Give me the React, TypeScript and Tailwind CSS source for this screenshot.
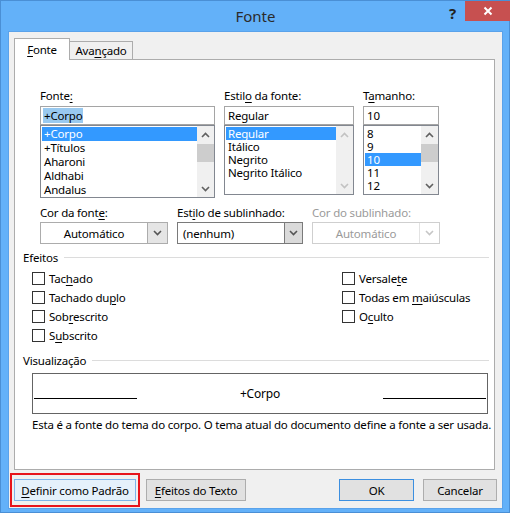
import type { ReactNode } from 'react';

function U({ children }: { children: ReactNode }) {
  return <span className="underline underline-offset-[2px] decoration-1">{children}</span>;
}

function Chevron({ up, color }: { up?: boolean; color: string }) {
  return (
    <svg width="9" height="6" viewBox="0 0 9 6">
      <polyline
        points={up ? '1,5 4.5,1.5 8,5' : '1,1 4.5,4.5 8,1'}
        fill="none"
        stroke={color}
        strokeWidth="1.6"
      />
    </svg>
  );
}

function ScrollBar({ enabled, height }: { enabled: boolean; height: number }) {
  const color = enabled ? '#606060' : '#c2c2c2';
  return (
    <div className="w-[17px] bg-[#f0f0f0] flex flex-col" style={{ height }}>
      <div className="h-[17px] flex items-center justify-center">
        <Chevron up color={color} />
      </div>
      {enabled && <div className="h-[18px] bg-[#cdcdcd] mt-[1px]" />}
      <div className="flex-1" />
      <div className="h-[17px] flex items-center justify-center">
        <Chevron color={color} />
      </div>
    </div>
  );
}

function ListBox({
  items,
  selected,
  height,
  rowH,
  scroll,
}: {
  items: string[];
  selected: number;
  height: number;
  rowH: string;
  scroll: boolean;
}) {
  return (
    <div className="flex border border-[#828790] bg-white" style={{ height }}>
      <div className="flex-1 pt-[1px] pl-[1px] overflow-hidden">
        {items.map((item, i) => (
          <div
            key={item}
            className={`${rowH} flex items-center pl-[2px] ${
              i === selected ? 'bg-[#3399ff] text-white' : 'text-black'
            }`}
          >
            {item}
          </div>
        ))}
      </div>
      <ScrollBar enabled={scroll} height={height - 2} />
    </div>
  );
}

function Dropdown({
  text,
  width,
  arrowW,
  center,
  variant,
}: {
  text: string;
  width: string;
  arrowW: string;
  center?: boolean;
  variant: 'normal' | 'hot' | 'disabled';
}) {
  const border =
    variant === 'hot' ? 'border-[#7a7a7a]' : variant === 'disabled' ? 'border-[#cfcfcf]' : 'border-[#acacac]';
  const arrowBg =
    variant === 'hot'
      ? 'bg-[#dadada] border-l border-[#7a7a7a]'
      : variant === 'disabled'
      ? 'bg-white border-l border-[#e3e3e3]'
      : 'bg-[#e5e5e5] border-l border-[#acacac]';
  return (
    <div className={`${width} h-[22px] flex border ${border} bg-white`}>
      <div
        className={`flex-1 flex items-center ${center ? 'justify-center' : 'pl-[5px]'} ${
          variant === 'disabled' ? 'text-[#9a9a9a]' : 'text-black'
        }`}
      >
        {text}
      </div>
      <div className={`${arrowW} flex items-center justify-center ${arrowBg}`}>
        <Chevron color={variant === 'disabled' ? '#c6c6c6' : '#555555'} />
      </div>
    </div>
  );
}

function Check({ children }: { children: ReactNode }) {
  return (
    <div className="h-[19px] flex items-center">
      <div className="w-[13px] h-[13px] border border-[#333333] bg-white" />
      <span className="ml-[4px]">{children}</span>
    </div>
  );
}

function GroupHeader({ children }: { children: ReactNode }) {
  return (
    <div className="h-[15px] flex items-center pl-[8px] pr-[5px]">
      <span>{children}</span>
      <div className="flex-1 h-px bg-[#dcdcdc] ml-[6px]" />
    </div>
  );
}

function Button({ children, variant }: { children: ReactNode; variant: 'focus' | 'default' | 'normal' }) {
  const cls =
    variant === 'focus'
      ? 'bg-[#e5f1fb] border-[#7eb4ea]'
      : variant === 'default'
      ? 'bg-[#e1e1e1] border-[#3c8fe0]'
      : 'bg-[#e1e1e1] border-[#adadad]';
  return (
    <div className={`h-[22px] w-full flex items-center justify-center border ${cls} text-black`}>
      {children}
    </div>
  );
}

export default function App() {
  return (
    <div className="w-[511px] h-[517px] bg-white font-['Noto_Sans',sans-serif] text-[11.5px] tracking-[-0.2px] leading-[15px] text-black">
      <div className="w-[510px] h-[513px] bg-[#63b1f9] border border-[#4a8fd5] pl-[7px] pr-[6px] flex flex-col">
        {/* title bar */}
        <div className="h-[30px] relative flex justify-center pt-[6px]">
          <span className="text-[15px] tracking-normal leading-[18px] text-[#2b2b2b]">Fonte</span>
          <div className="absolute top-0 -right-[7px] flex items-start">
            <span className="text-[15px] font-bold leading-[18px] text-[#222] mt-[3px] mr-[9px]">?</span>
            <div className="w-[45px] h-[20px] bg-[#c75050] flex items-center justify-center">
              <svg width="10" height="10" viewBox="0 0 10 10">
                <path d="M1.5 1.5 L8.5 8.5 M8.5 1.5 L1.5 8.5" stroke="white" strokeWidth="2" />
              </svg>
            </div>
          </div>
        </div>

        {/* client area */}
        <div className="h-[478px] bg-[#f0f0f0] border border-[#5aa2ea] px-[5px] pt-[6px] flex flex-col">
          {/* tabs */}
          <div className="h-[21px] flex items-end">
            <div className="h-[22px] w-[56px] -mb-px relative z-10 bg-white border-l border-t border-r border-[#acacac] flex items-center justify-center">
              <span>
                <U>F</U>onte
              </span>
            </div>
            <div className="h-[18px] w-[64px] -ml-px border border-b-0 border-[#acacac] bg-[#f0f0f0] flex items-center justify-center">
              <span>
                Ava<U>n</U>çado
              </span>
            </div>
          </div>

          {/* panel */}
          <div className="h-[411px] w-[481px] bg-white border border-[#acacac] pt-[28px] flex flex-col">
            <div className="flex items-start pl-[25px]">
              <div className="w-[175px]">
                <div className="h-[18px]">
                  Fonte<U>:</U>
                </div>
                <div className="h-[19px] border border-[#a5a5a5] flex items-center pl-[2px]">
                  <span className="bg-[#99c9ef] px-[1px]">+Corpo</span>
                </div>
                <ListBox
                  items={['+Corpo', '+Títulos', 'Aharoni', 'Aldhabi', 'Andalus']}
                  selected={0}
                  height={73}
                  rowH="h-[14px] leading-[14px]"
                  scroll
                />
              </div>
              <div className="w-[130px] ml-[9px]">
                <div className="h-[18px]">
                  Estil<U>o</U> da fonte:
                </div>
                <div className="h-[19px] border border-[#a5a5a5] flex items-center pl-[3px]">Regular</div>
                <ListBox
                  items={['Regular', 'Itálico', 'Negrito', 'Negrito Itálico']}
                  selected={0}
                  height={70}
                  rowH="h-[13px] leading-[13px]"
                  scroll={false}
                />
              </div>
              <div className="w-[76px] ml-[9px]">
                <div className="h-[18px]">
                  T<U>a</U>manho:
                </div>
                <div className="h-[19px] border border-[#a5a5a5] flex items-center pl-[3px]">10</div>
                <ListBox
                  items={['8', '9', '10', '11', '12']}
                  selected={2}
                  height={70}
                  rowH="h-[13px] leading-[13px]"
                  scroll
                />
              </div>
            </div>

            {/* colour / underline row */}
            <div className="flex items-start pl-[25px] mt-[7px]">
              <div className="w-[128px]">
                <div className="h-[17px]">
                  Cor da font<U>e</U>:
                </div>
                <Dropdown text="Automático" width="w-[128px]" arrowW="w-[20px]" center variant="normal" />
              </div>
              <div className="w-[126px] ml-[9px]">
                <div className="h-[17px]">
                  Est<U>i</U>lo de sublinhado:
                </div>
                <Dropdown text="(nenhum)" width="w-[126px]" arrowW="w-[18px]" variant="hot" />
              </div>
              <div className="w-[128px] ml-[9px]">
                <div className="h-[17px] text-[#9a9a9a]">Cor do sublinhado:</div>
                <Dropdown text="Automático" width="w-[128px]" arrowW="w-[20px]" center variant="disabled" />
              </div>
            </div>

            {/* effects */}
            <div className="mt-[6px]">
              <GroupHeader>Efeitos</GroupHeader>
            </div>
            <div className="grid grid-cols-[310px_1fr] pl-[17px] mt-[4px]">
              <div className="flex flex-col">
                <Check>
                  Tac<U>h</U>ado
                </Check>
                <Check>
                  Tachado du<U>p</U>lo
                </Check>
                <Check>
                  Sob<U>r</U>escrito
                </Check>
                <Check>
                  S<U>u</U>bscrito
                </Check>
              </div>
              <div className="flex flex-col">
                <Check>
                  Versale<U>t</U>e
                </Check>
                <Check>
                  Todas em <U>m</U>aiúsculas
                </Check>
                <Check>
                  O<U>c</U>ulto
                </Check>
              </div>
            </div>

            {/* preview */}
            <div className="mt-[8px]">
              <GroupHeader>Visualização</GroupHeader>
            </div>
            <div className="ml-[17px] mt-[5px] w-[456px] h-[41px] border border-[#646464] flex items-start px-[1px]">
              <div className="w-[103px] h-[25px] border-b border-black" />
              <div className="flex-1 text-center pt-[12px] text-[12px]">+Corpo</div>
              <div className="w-[103px] h-[25px] border-b border-black" />
            </div>
            <div className="ml-[17px] mt-[3px] whitespace-nowrap">
              Esta é a fonte do tema do corpo. O tema atual do documento define a fonte a ser usada.
            </div>
          </div>

          {/* buttons */}
          <div className="flex items-start mt-[9px]">
            <div className="w-[122px] relative">
              <Button variant="focus">
                <span>
                  <U>D</U>efinir como Padrão
                </span>
              </Button>
              <div className="absolute -left-[4px] -right-[4px] -top-[6px] -bottom-[6px] border-2 border-[#e8141b]" />
            </div>
            <div className="w-[100px] ml-[10px]">
              <Button variant="normal">
                <span>
                  <U>E</U>feitos do Texto
                </span>
              </Button>
            </div>
            <div className="flex-1" />
            <div className="w-[75px]">
              <Button variant="default">OK</Button>
            </div>
            <div className="w-[74px] ml-[9px]">
              <Button variant="normal">Cancelar</Button>
            </div>
          </div>
        </div>
      </div>
    </div>
  );
}
